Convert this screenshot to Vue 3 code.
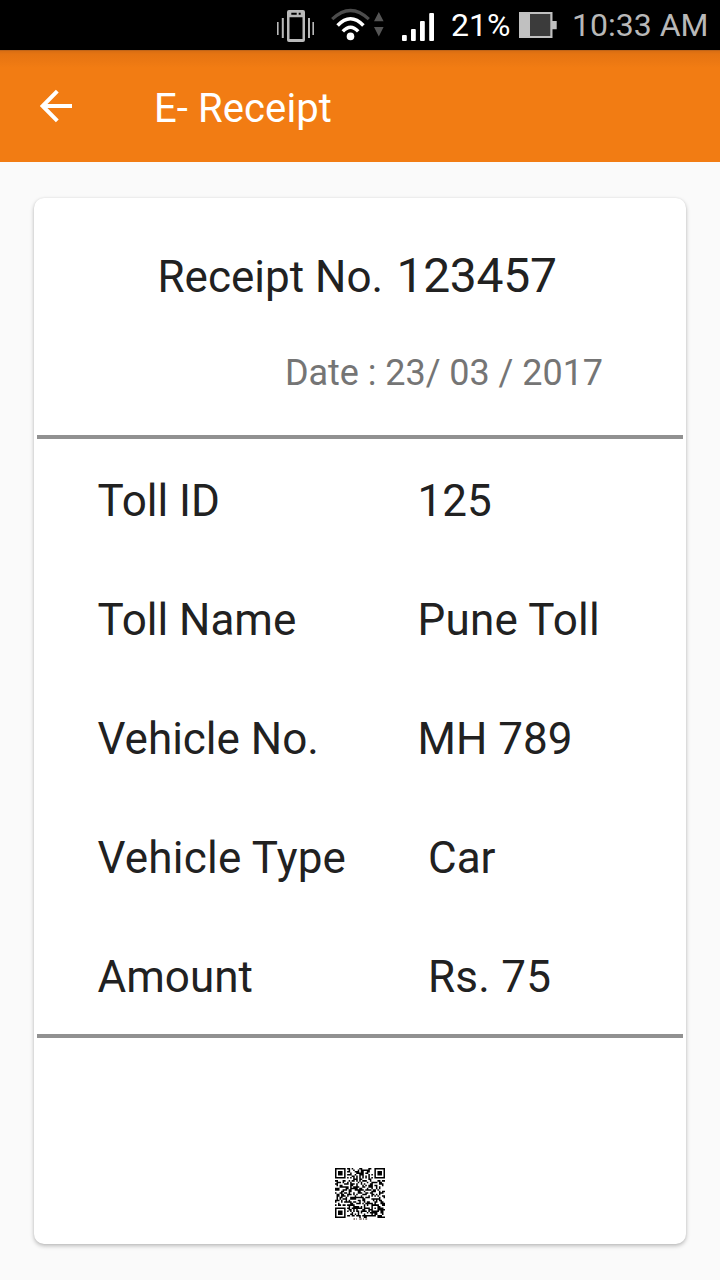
<script setup>
const rows = [
  { label: 'Toll ID', value: '125' },
  { label: 'Toll Name', value: 'Pune Toll', wideValue: true },
  { label: 'Vehicle No.', value: 'MH 789' },
  { label: 'Vehicle Type', value: 'Car', inset: true, wideLabel: true },
  { label: 'Amount', value: 'Rs. 75', inset: true, wideValue: true }
]

const SIZE = 33

function ring(x, y, cx, cy, radius) {
  return Math.max(Math.abs(x - cx), Math.abs(y - cy)) <= radius
}

function isDark(x, y) {
  for (const [cx, cy] of [[3, 3], [29, 3], [3, 29]]) {
    if (ring(x, y, cx, cy, 4)) {
      const d = Math.max(Math.abs(x - cx), Math.abs(y - cy))
      return d !== 4 && d !== 2
    }
  }
  if (ring(x, y, 26, 26, 2)) {
    return Math.max(Math.abs(x - 26), Math.abs(y - 26)) !== 1
  }
  if (x === 6 || y === 6) return (x + y) % 2 === 0
  let h = (x * 374761393 + y * 668265263 + 97) | 0
  h = Math.imul(h ^ (h >>> 13), 1274126177)
  return ((h ^ (h >>> 16)) & 255) < 132
}

let qrPath = ''
for (let y = 0; y < SIZE; y++) {
  for (let x = 0; x < SIZE; x++) {
    if (isDark(x, y)) qrPath += `M${x} ${y}h1v1h-1z`
  }
}
</script>

<template>
  <div class="screen">
    <header class="status">
      <svg class="status-icons" width="164" height="50" viewBox="274 0 164 50">
        <g fill="#b9b9b9">
          <rect x="277" y="22" width="1.6" height="13" />
          <rect x="281.8" y="18" width="2" height="20" />
          <rect x="308" y="18" width="2" height="20" />
          <rect x="312.4" y="22" width="1.6" height="13" />
          <path fill-rule="evenodd" d="M289 10h14a2 2 0 0 1 2 2v28a2 2 0 0 1-2 2h-14a2 2 0 0 1-2-2v-28a2 2 0 0 1 2-2zM289.5 17.3v21.7h13v-21.7zM291.3 12.8v2h5.4v-2zM298.7 12.8v2h2v-2z" />
        </g>
        <g fill="none" stroke-linecap="butt">
          <path d="M332.2 19.2Q350.5 1.8 368.8 19.2" stroke="#4c4c4c" stroke-width="3.2" />
          <path d="M337.6 25.4Q350.5 12 363.4 25.4" stroke="#fff" stroke-width="3.6" />
          <path d="M342.8 31.4Q350.5 23 358.2 31.4" stroke="#fff" stroke-width="3.4" />
        </g>
        <circle cx="350.5" cy="36.4" r="3.8" fill="#fff" />
        <path d="M374 21.2h9.6l-4.8-9.2zM374 27h9.6l-4.8 9.5z" fill="#555" />
        <g fill="#fff">
          <rect x="402" y="35" width="4.8" height="6" rx="1" />
          <rect x="411" y="29" width="4.8" height="12" rx="1" />
          <rect x="420" y="21" width="4.8" height="20" rx="1" />
          <rect x="429.2" y="13" width="4.8" height="28" rx="1" />
        </g>
      </svg>
      <span class="percent">21%</span>
      <svg class="battery" width="38" height="50" viewBox="519 0 38 50">
        <path d="M519 12h33.5v9h4.2v8.3h-4.2v8.7h-33.5z" fill="#c0c0c0" />
        <rect x="530" y="14" width="20.3" height="22" fill="#3b3b3b" />
      </svg>
      <span class="clock">10:33 AM</span>
    </header>

    <nav class="toolbar">
      <svg class="back" width="34" height="34" viewBox="0 0 34 34">
        <path d="M33 17H4M18.3 2.2L3.6 17L18.3 31.8" fill="none" stroke="#fff" stroke-width="4" />
      </svg>
      <h1 class="title">E- Receipt</h1>
    </nav>

    <main class="content">
      <section class="card">
        <div class="receipt">
          <span class="receipt-label">Receipt No.</span>
          <span class="receipt-number">123457</span>
        </div>
        <div class="date"><span>Date : 23/ 03 / 2017</span></div>
        <div class="details">
          <div v-for="row in rows" :key="row.label" class="row">
            <span class="label" :class="{ wide: row.wideLabel }">{{ row.label }}</span>
            <span class="value" :class="{ inset: row.inset, wide: row.wideValue }">{{ row.value }}</span>
          </div>
        </div>
        <div class="code">
          <svg width="50" height="53" viewBox="0 0 33 34.98">
            <path :d="qrPath" fill="#000" />
            <path d="M12.2 33.6h1M14 33.6h.5M16 33.6h1.6M18.5 33.6h.7M20 33.6h1.2" stroke="#6d5a52" stroke-width="1" />
          </svg>
        </div>
      </section>
    </main>
  </div>
</template>

<style>
body {
  margin: 0;
  background: #fafafa;
}
</style>

<style scoped>
.screen {
  display: flex;
  flex-direction: column;
  width: 720px;
  height: 1280px;
  overflow: hidden;
  background: #fafafa;
  font-family: Roboto, "Liberation Sans", sans-serif;
  white-space: nowrap;
}
.status {
  display: flex;
  align-items: center;
  height: 50px;
  padding-left: 274px;
  background: #000;
}
.status-icons,
.battery {
  display: block;
  flex: none;
}
.percent {
  width: 68px;
  padding-left: 13px;
  font-size: 32px;
  line-height: 50px;
  color: #fff;
}
.clock {
  margin-left: 15px;
  font-size: 32px;
  line-height: 50px;
  color: #b8b8b8;
}
.toolbar {
  display: flex;
  align-items: center;
  height: 112px;
  padding-left: 39px;
  background: linear-gradient(#a95c1d 0, #d96e13 1px, #e57412 4px, #f27c13 18px);
}
.back {
  flex: none;
}
.title {
  margin: 6px 0 0 81px;
  font-size: 40px;
  font-weight: 400;
  line-height: 56px;
  letter-spacing: 0.1px;
  color: #fff;
}
.content {
  padding: 36px 34px;
}
.card {
  display: flex;
  flex-direction: column;
  height: 1046px;
  border-radius: 10px;
  background: #fff;
  box-shadow: 0 2px 4px rgba(0, 0, 0, 0.25), 0 0 2px rgba(0, 0, 0, 0.08);
  color: #212121;
}
.receipt {
  display: flex;
  align-items: baseline;
  height: 127px;
  padding-left: 123.5px;
  line-height: 156px;
}
.receipt-label {
  width: 239px;
  font-size: 44px;
}
.receipt-number {
  font-size: 48px;
  letter-spacing: -0.3px;
}
.date {
  height: 110px;
  padding-left: 251px;
  font-size: 36px;
  line-height: 96px;
  letter-spacing: -0.05px;
  color: #757575;
}
.details {
  height: 595px;
  margin: 0 3px;
  border-top: 4px solid #919191;
  border-bottom: 4px solid #919191;
}
.row {
  display: flex;
  height: 119px;
  padding-left: 60.5px;
  font-size: 44px;
  line-height: 124px;
}
.label {
  width: 320px;
}
.wide {
  letter-spacing: 0.22px;
}
.inset {
  padding-left: 10.5px;
}
.code {
  display: flex;
  justify-content: center;
  padding-top: 130px;
}
</style>
